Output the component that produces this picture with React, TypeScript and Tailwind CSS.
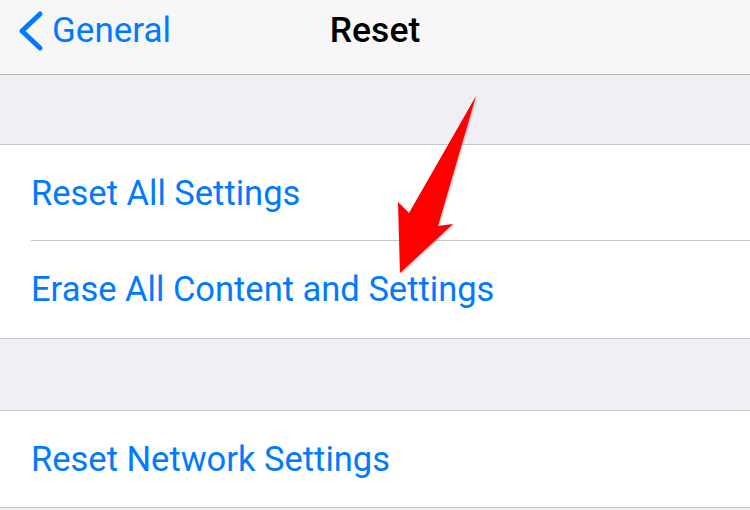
import React from "react";

const font = { fontFamily: '"Roboto", "Liberation Sans", sans-serif' };

function Row({ label, inset, tall }: { label: string; inset?: boolean; tall?: boolean }) {
  return (
    <div
      className={`relative flex items-center bg-white pl-[31px] ${tall ? "h-[97px]" : "h-[96px]"}`}
    >
      <span className="text-[34.5px] leading-none text-[#007aff]">{label}</span>
      {inset ? (
        <div className="absolute bottom-0 left-[31px] right-0 h-px bg-[#c8c7cc]" />
      ) : null}
    </div>
  );
}

export default function App() {
  return (
    <div className="relative h-[510px] w-[750px] overflow-hidden bg-[#efeff4]" style={font}>
      <div className="relative flex h-[75px] items-center justify-center border-b border-[#b2b2b2] bg-[#f7f7f7] pb-[13px]">
        <div className="absolute left-[16px] top-0 flex h-full items-center gap-[8px] pb-[13px]">
          <svg width="28" height="42" viewBox="0 0 28 42">
            <path
              d="M24 4 L6 21 L24 38"
              fill="none"
              stroke="#007aff"
              strokeWidth="5"
              strokeLinecap="round"
              strokeLinejoin="round"
            />
          </svg>
          <span className="text-[35px] leading-none text-[#007aff]">General</span>
        </div>
        <span className="text-[35.5px] font-medium leading-none text-black">Reset</span>
      </div>

      <div className="h-[69px]" />

      <div className="border-y border-[#c8c7cc] bg-white">
        <Row label="Reset All Settings" inset />
        <Row label="Erase All Content and Settings" tall />
      </div>

      <div className="h-[71px]" />

      <div className="border-y border-[#c8c7cc] bg-white">
        <Row label="Reset Network Settings" />
      </div>

      <svg
        className="absolute left-0 top-0"
        width="750"
        height="510"
        viewBox="0 0 750 510"
      >
        <polygon
          points="476,96 438,226 453,224 400,273 398,202 409,213"
          fill="#ff0000"
          style={{ filter: "drop-shadow(1px 1px 1px rgba(0,0,0,0.25))" }}
        />
      </svg>
    </div>
  );
}
